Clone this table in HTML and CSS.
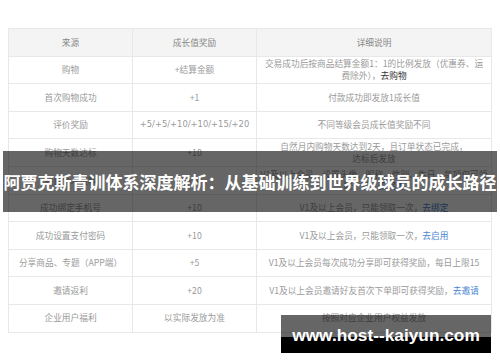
FILE: index.html
```html
<!DOCTYPE html>
<html>
<head>
    <meta charset="UTF-8">
    <title>成长值说明</title>
    <link rel="stylesheet" href="styles.css">
</head>
<body>
    <div class="page">
        <table class="grow">
            <tr class="head">
                <th class="c1">来源</th>
                <th class="c2">成长值奖励</th>
                <th class="c3">详细说明</th>
            </tr>
            <tr>
                <td>购物</td>
                <td>+结算金额</td>
                <td>交易成功后按商品结算金额1：1的比例发放（优惠券、运<br>费除外），<a href="javascript:;" class="dark">去购物</a></td>
            </tr>
            <tr>
                <td>首次购物成功</td>
                <td>+1</td>
                <td>付款成功即发放1成长值</td>
            </tr>
            <tr>
                <td>评价奖励</td>
                <td class="num">+5/+5/+10/+10/+15/+20</td>
                <td>不同等级会员成长值奖励不同</td>
            </tr>
            <tr>
                <td>购物天数达标</td>
                <td>+10</td>
                <td>自然月内购物天数达到2天，且订单状态已完成，<br>达标后发放</td>
            </tr>
            <tr>
                <td>完善个人资料</td>
                <td>+10</td>
                <td>V1及以上会员，设置头像、昵称、性别、生日，每项仅可领取一次，<a href="javascript:;">去完善</a></td>
            </tr>
            <tr>
                <td>成功绑定手机号</td>
                <td>+10</td>
                <td>V1及以上会员，只能领取一次，<a href="javascript:;">去绑定</a></td>
            </tr>
            <tr>
                <td>成功设置支付密码</td>
                <td>+10</td>
                <td>V1及以上会员，只能领取一次，<a href="javascript:;">去启用</a></td>
            </tr>
            <tr>
                <td>分享商品、专题（APP端）</td>
                <td>+5</td>
                <td>V1及以上会员每次成功分享即可获得奖励，每日上限15</td>
            </tr>
            <tr>
                <td>邀请返利</td>
                <td>+20</td>
                <td>V1及以上会员邀请好友首次下单即可获得奖励，<a href="javascript:;">去邀请</a></td>
            </tr>
            <tr>
                <td>企业用户福利</td>
                <td>以实际发放为准</td>
                <td>按照对应企业用户权益发放</td>
            </tr>
        </table>

        <div class="title">阿贾克斯青训体系深度解析：从基础训练到世界级球员的成长路径</div>
        <div class="mark">
            <span>www.host--kaiyun.com</span>
        </div>
    </div>
</body>
</html>
```

FILE: styles.css
```css
* {
    margin: 0;
    padding: 0;
}
body {
    width: 500px;
    height: 362px;
    overflow: hidden;
    background: #fff;
    font-family: "Noto Sans CJK SC", "Liberation Sans", sans-serif;
}
.page {
    position: relative;
    width: 500px;
    height: 362px;
    padding: 28px 8px 0;
    box-sizing: border-box;
}
.grow {
    width: 484px;
    border-collapse: collapse;
    table-layout: fixed;
    border: 1px solid #e6e6e6;
}
.grow th,
.grow td {
    box-sizing: border-box;
    height: 27.6px;
    border: 1px solid #e8e8e8;
    text-align: center;
    vertical-align: middle;
    font-size: 8.7px;
    line-height: 11.5px;
    font-weight: normal;
    color: #9a9a9a;
    padding: 0 5px;
    overflow: hidden;
}
.grow td:last-child {
    padding: 0 2px;
}
.head th {
    background: #f4f4f4;
    color: #888;
}
.c1 { width: 124px; }
.c2 { width: 124px; }
.grow td.num {
    padding: 0;
    font-family: "DejaVu Sans", sans-serif;
    font-size: 8.4px;
}
.grow a {
    color: #4a86d0;
    text-decoration: none;
}
.grow a.dark {
    color: #333;
}

.title {
    position: absolute;
    left: 3px;
    top: 151px;
    width: 494px;
    height: 61px;
    background: rgba(0, 0, 0, 0.6);
    color: #fff;
    font-size: 17px;
    font-weight: bold;
    line-height: 61px;
    text-align: center;
    white-space: nowrap;
}
.mark {
    position: absolute;
    left: 281px;
    top: 315px;
    width: 210px;
    height: 38px;
    background: rgba(0, 0, 0, 0.6);
}
.mark::after {
    content: "";
    position: absolute;
    left: 0;
    right: 0;
    bottom: 0;
    height: 16px;
    background: #000;
}
.mark span {
    position: absolute;
    z-index: 1;
    left: 0;
    right: 0;
    top: 12px;
    color: #fff;
    font-family: "Liberation Sans", sans-serif;
    font-weight: bold;
    font-size: 17.3px;
    line-height: 17px;
    text-align: center;
    white-space: nowrap;
}
```
